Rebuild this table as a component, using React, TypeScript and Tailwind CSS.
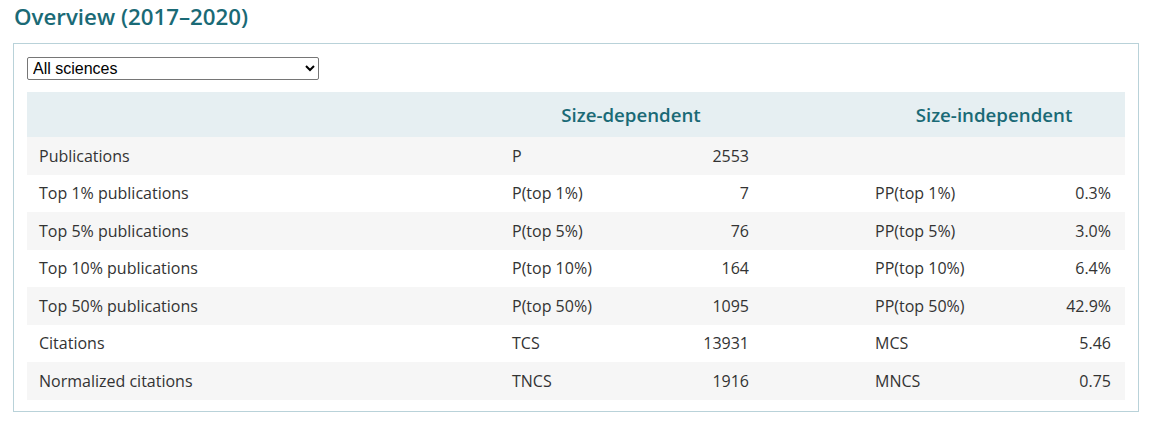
import React from 'react';

// Rows of the overview table
const rows = [
    { label: 'Publications', dep: 'P', depValue: '2553', ind: '', indValue: '' },
    { label: 'Top 1% publications', dep: 'P(top 1%)', depValue: '7', ind: 'PP(top 1%)', indValue: '0.3%' },
    { label: 'Top 5% publications', dep: 'P(top 5%)', depValue: '76', ind: 'PP(top 5%)', indValue: '3.0%' },
    { label: 'Top 10% publications', dep: 'P(top 10%)', depValue: '164', ind: 'PP(top 10%)', indValue: '6.4%' },
    { label: 'Top 50% publications', dep: 'P(top 50%)', depValue: '1095', ind: 'PP(top 50%)', indValue: '42.9%' },
    { label: 'Citations', dep: 'TCS', depValue: '13931', ind: 'MCS', indValue: '5.46' },
    { label: 'Normalized citations', dep: 'TNCS', depValue: '1916', ind: 'MNCS', indValue: '0.75' },
];

const App: React.FC = () => {
    return (
        <div className="w-[1155px] h-[424px] bg-white font-['Open_Sans',sans-serif] text-[#333333]">
            <h2 className="pl-[14px] pt-[1px] text-[22.3px] leading-[32px] font-semibold text-[#1a6a76]">
                Overview (2017–2020)
            </h2>

            <div className="mt-[10px] ml-[13px] w-[1126px] border border-[#b9d2d9] px-[13px] pt-[13px] pb-[11px]">
                {/* Field selector */}
                <select
                    defaultValue="all"
                    className="block w-[292px] h-[23px] border border-[#767676] rounded-[2px] bg-white pl-[1px] text-[16px] leading-[20px] text-black font-['Liberation_Sans',Arial,sans-serif]"
                >
                    <option value="all">All sciences</option>
                </select>

                {/* Table */}
                <div className="mt-[12px] w-[1098px] text-[16px]">
                    <div className="grid grid-cols-[473px_262px_101px_262px] h-[45px] bg-[#e6eff2] items-center text-[18.7px] font-semibold text-[#1a6a76]">
                        <div />
                        <div className="text-center pt-[2px]">Size-dependent</div>
                        <div />
                        <div className="text-center pt-[2px]">Size-independent</div>
                    </div>

                    {rows.map((row, i) => (
                        <div
                            key={row.label}
                            className={`grid grid-cols-[473px_131px_131px_101px_131px_131px] h-[37.5px] items-center ${i % 2 === 0 ? 'bg-[#f6f6f6]' : 'bg-white'}`}
                        >
                            <div className="pl-[12px]">{row.label}</div>
                            <div className="pl-[12px]">{row.dep}</div>
                            <div className="text-right pr-[13px]">{row.depValue}</div>
                            <div />
                            <div className="pl-[12px]">{row.ind}</div>
                            <div className="text-right pr-[14px]">{row.indValue}</div>
                        </div>
                    ))}
                </div>
            </div>
        </div>
    );
};

export default App;
